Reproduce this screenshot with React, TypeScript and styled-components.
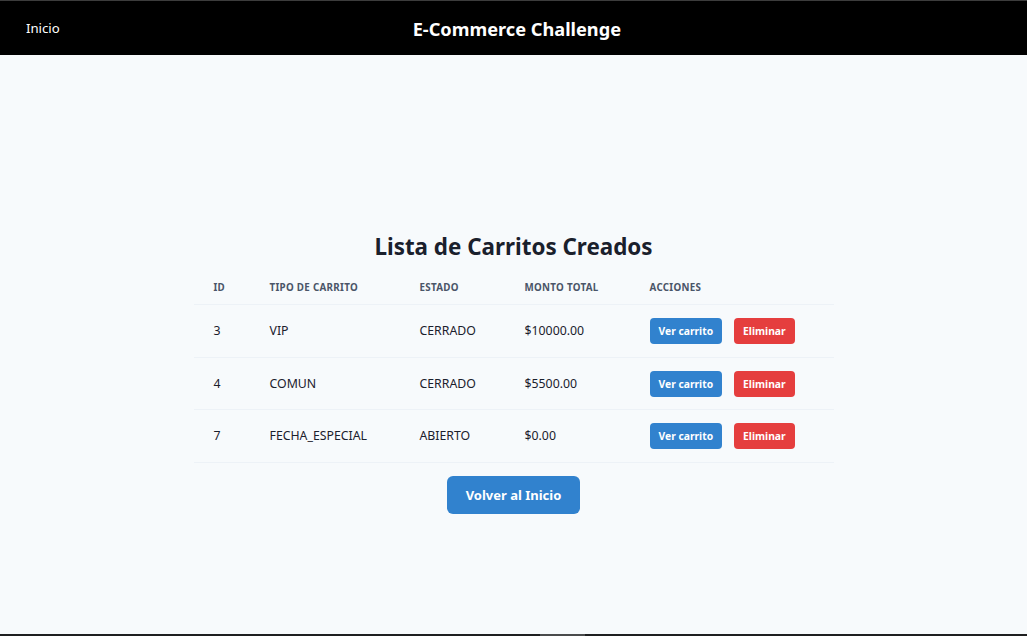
import React from "react";
import styled, { createGlobalStyle } from "styled-components";

const Global = createGlobalStyle`
  html, body { margin: 0; padding: 0; }
  body {
    background: #f7fafc;
    font-family: "Noto Sans", "Open Sans", sans-serif;
    color: #1a202c;
    overflow: hidden;
  }
  * { box-sizing: border-box; }
`;

const Page = styled.div`
  height: 100vh;
  overflow: hidden;
`;

const Nav = styled.nav`
  height: 55px;
  background: #000;
  border-top: 1px solid #3c3c3c;
  display: flex;
  align-items: center;
  padding: 0 53px 0 26px;
`;

const NavLink = styled.a`
  color: #fff;
  font-size: 13.2px;
  text-decoration: none;
`;

const NavTitle = styled.h1`
  flex: 1;
  margin: 2px 0 0;
  text-align: center;
  color: #fff;
  font-size: 18.2px;
  font-weight: 700;
`;

const Main = styled.main`
  min-height: 100vh;
  display: flex;
  flex-direction: column;
  align-items: center;
  justify-content: center;
`;

const Heading = styled.h2`
  margin: 0 0 10px;
  font-size: 22.4px;
  line-height: 30px;
  font-weight: 700;
  color: #1a202c;
`;

const Table = styled.table`
  width: 640px;
  border-collapse: collapse;
`;

const Th = styled.th<{ $w: number }>`
  width: ${(p) => p.$w}px;
  text-align: left;
  padding: 8px 20px 8px;
  font-size: 9.8px;
  line-height: 16px;
  font-weight: 700;
  text-transform: uppercase;
  letter-spacing: 0.3px;
  color: #4a5568;
  border-bottom: 1px solid #edf2f7;
`;

const Td = styled.td`
  padding: 13px 20px 12.5px;
  font-size: 12.3px;
  line-height: 26px;
  color: #1a202c;
  border-bottom: 1px solid #edf2f7;
  white-space: nowrap;
`;

const Actions = styled.div`
  display: flex;
  gap: 12px;
`;

const SmallButton = styled.button<{ $tone: "blue" | "red" }>`
  height: 26px;
  padding: 0 9px;
  border: none;
  border-radius: 4px;
  background: ${(p) => (p.$tone === "blue" ? "#3182ce" : "#e53e3e")};
  color: #fff;
  font-family: inherit;
  font-size: 10.3px;
  font-weight: 700;
  cursor: pointer;
`;

const BigButton = styled.button`
  margin-top: 13px;
  height: 38px;
  padding: 0 19px;
  border: none;
  border-radius: 6px;
  background: #3182ce;
  color: #fff;
  font-family: inherit;
  font-size: 13px;
  font-weight: 700;
  cursor: pointer;
`;

const BottomBar = styled.div`
  position: fixed;
  left: 0;
  right: 0;
  bottom: 0;
  height: 2px;
  background: #1e1f20;
`;

const BottomThumb = styled.div`
  position: absolute;
  left: 540px;
  width: 45px;
  top: 0;
  bottom: 0;
  background: #4a4b4c;
`;

const carts = [
  { id: 3, tipo: "VIP", estado: "CERRADO", monto: "$10000.00" },
  { id: 4, tipo: "COMUN", estado: "CERRADO", monto: "$5500.00" },
  { id: 7, tipo: "FECHA_ESPECIAL", estado: "ABIERTO", monto: "$0.00" },
];

export default function App() {
  return (
    <Page>
      <Global />
      <Nav>
        <NavLink href="#">Inicio</NavLink>
        <NavTitle>E-Commerce Challenge</NavTitle>
      </Nav>
      <Main>
        <Heading>Lista de Carritos Creados</Heading>
        <Table>
          <thead>
            <tr>
              <Th $w={56}>ID</Th>
              <Th $w={150}>Tipo de Carrito</Th>
              <Th $w={105}>Estado</Th>
              <Th $w={125}>Monto Total</Th>
              <Th $w={204}>Acciones</Th>
            </tr>
          </thead>
          <tbody>
            {carts.map((c) => (
              <tr key={c.id}>
                <Td>{c.id}</Td>
                <Td>{c.tipo}</Td>
                <Td>{c.estado}</Td>
                <Td>{c.monto}</Td>
                <Td>
                  <Actions>
                    <SmallButton $tone="blue">Ver carrito</SmallButton>
                    <SmallButton $tone="red">Eliminar</SmallButton>
                  </Actions>
                </Td>
              </tr>
            ))}
          </tbody>
        </Table>
        <BigButton>Volver al Inicio</BigButton>
      </Main>
      <BottomBar>
        <BottomThumb />
      </BottomBar>
    </Page>
  );
}
